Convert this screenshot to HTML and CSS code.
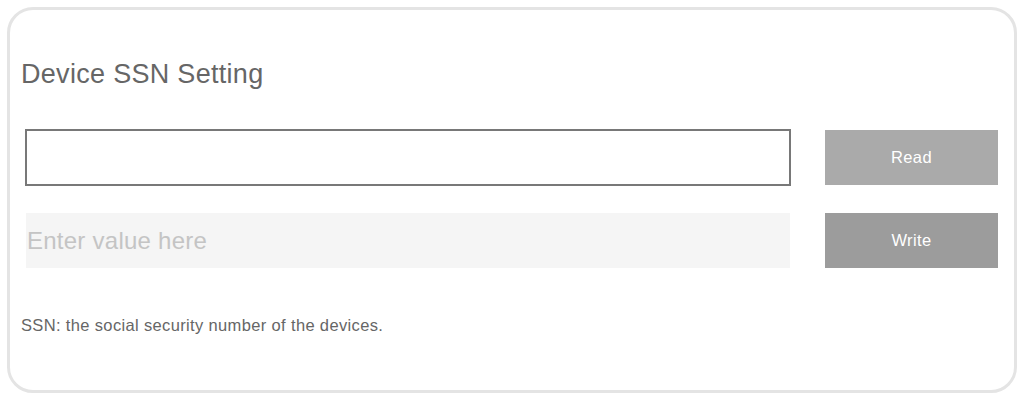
FILE: index.html
```html
<!DOCTYPE html>
<html lang="en">
<head>
<meta charset="utf-8">
<title>Device SSN Setting</title>
<link rel="stylesheet" href="styles.css">
</head>
<body>
<div class="page">
  <section class="card">
    <h1 class="title">Device SSN Setting</h1>
    <div class="form">
      <input class="field field-read" type="text" aria-label="SSN value">
      <button class="btn btn-read" type="button">Read</button>
      <input class="field field-write" type="text" placeholder="Enter value here">
      <button class="btn btn-write" type="button">Write</button>
    </div>
    <p class="note">SSN: the social security number of the devices.</p>
  </section>
</div>
</body>
</html>
```

FILE: styles.css
```css
* { box-sizing: border-box; }
html, body {
  margin: 0;
  padding: 0;
  background: #ffffff;
  font-family: "Liberation Sans", Arial, Helvetica, sans-serif;
}
.page {
  padding: 7px 7px 0 7px;
}
.card {
  width: 1010px;
  height: 386px;
  border: 3px solid #e4e4e4;
  border-radius: 26px;
  padding: 49px 16px 0 11px;
  background: #ffffff;
}
.title {
  margin: 0;
  font-size: 27px;
  font-weight: normal;
  line-height: 31px;
  letter-spacing: 0.3px;
  color: #666666;
}
.form {
  margin: 39px 0 0 4px;
  display: grid;
  grid-template-columns: 766px 173px;
  column-gap: 34px;
  row-gap: 27px;
  align-items: center;
}
.field {
  margin: 0;
  font-family: inherit;
  outline: none;
}
.field-read {
  height: 57px;
  border: 2px solid #787878;
  background: #ffffff;
}
.field-write {
  height: 55px;
  margin: 0 1px;
  width: 764px;
  border: none;
  background: #f5f5f5;
  padding: 0 1px;
  font-size: 24px;
  letter-spacing: 0.25px;
  color: #555;
}
.field-write::placeholder {
  color: #c4c4c4;
}
.btn {
  height: 55px;
  border: none;
  margin: 0;
  padding: 0;
  font-family: inherit;
  font-size: 16.5px;
  letter-spacing: 0.4px;
  color: #ffffff;
}
.btn-read { background: #aaaaaa; }
.btn-write { background: #9c9c9c; }
.note {
  margin: 49px 0 0 0;
  font-size: 16.5px;
  line-height: 17px;
  letter-spacing: 0.35px;
  color: #666666;
}
```
